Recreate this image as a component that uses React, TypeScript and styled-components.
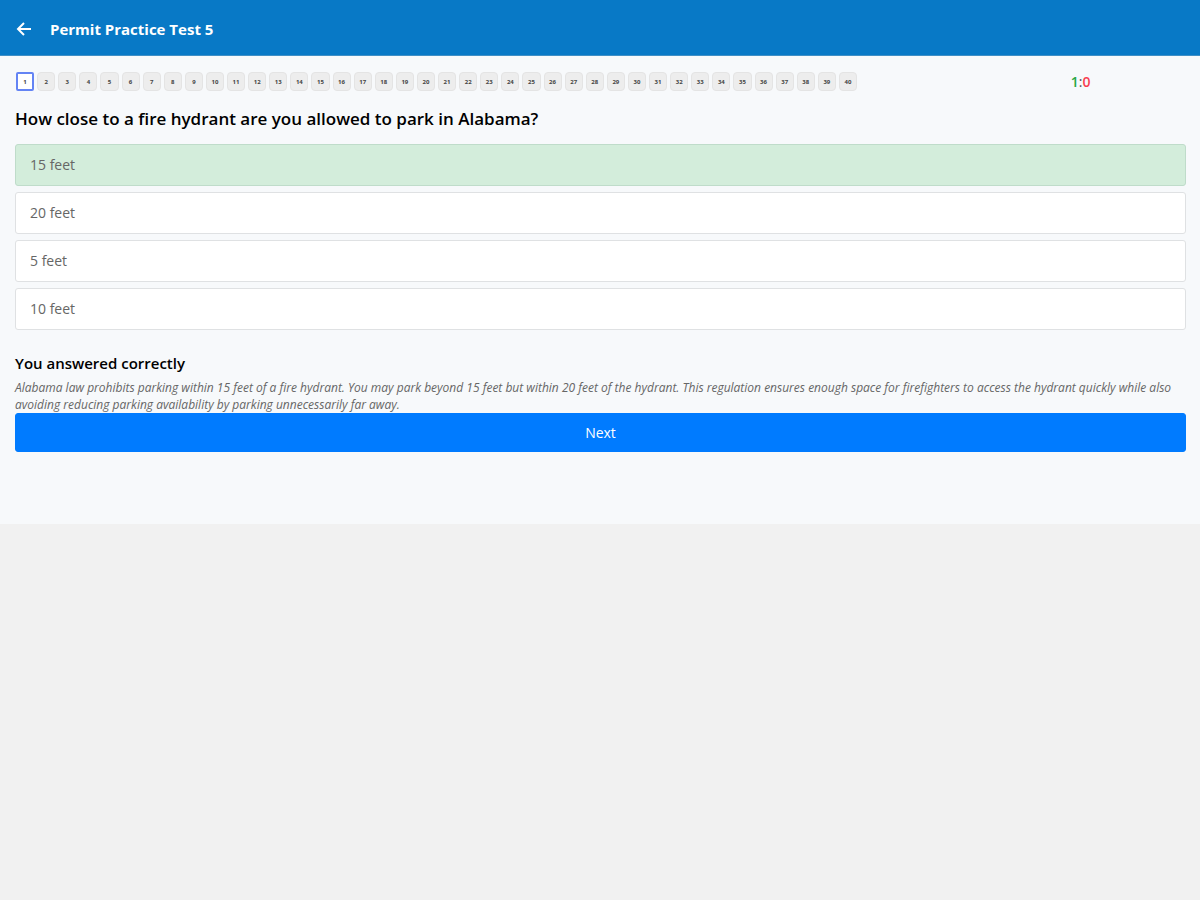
import React, { useState } from "react";
import styled, { createGlobalStyle } from "styled-components";

const GlobalStyle = createGlobalStyle`
  *, *::before, *::after { box-sizing: border-box; }
  body {
    margin: 0;
    background: #f1f1f1;
    color: #000;
    font-family: "Open Sans", "Noto Sans", sans-serif;
    font-size: 14px;
  }
  button { font-family: inherit; cursor: pointer; }
`;

const TopBar = styled.header`
  display: flex;
  align-items: center;
  gap: 16px;
  height: 56px;
  padding: 2px 14px 0;
  background: #0879c6;
  border-bottom: 1px solid #3f8fc6;
  color: #fff;
`;

const BackButton = styled.button`
  display: flex;
  padding: 0;
  border: 0;
  background: none;
  color: inherit;
`;

const Title = styled.h1`
  margin: 0;
  font-size: 15px;
  line-height: 24px;
  font-weight: 700;
`;

const Panel = styled.main`
  padding: 16px 14px 72px 15px;
  background: #f7f9fb;
`;

const ProgressRow = styled.div`
  display: flex;
  justify-content: space-between;
  align-items: center;
`;

const Pager = styled.nav`
  display: grid;
  grid-template-columns: repeat(40, minmax(0, 1fr));
  gap: 3px;
  flex: 0 1 842px;
  padding-left: 1px;
`;

const PageChip = styled.button<{ $current: boolean }>`
  height: 19px;
  padding: 0;
  border: ${(p) => (p.$current ? "2px solid #6484f4" : "1px solid #e4e4e4")};
  border-radius: ${(p) => (p.$current ? "2px" : "4px")};
  background: ${(p) => (p.$current ? "#fff" : "#ededed")};
  color: #444;
  font-size: 6px;
  line-height: 12px;
  font-weight: 700;
  text-align: center;
`;

const Score = styled.div`
  flex: 0 0 18%;
  text-align: center;
  color: #555;
  font-size: 14px;
  line-height: 18px;
`;

const ScoreValue = styled.span<{ $tone: string }>`
  color: ${(p) => p.$tone};
  font-weight: 600;
`;

const Question = styled.h2`
  margin: 16px 0 13px;
  font-size: 17px;
  line-height: 24px;
  font-weight: 600;
`;

const Answers = styled.div`
  display: grid;
  gap: 6px;
`;

const Answer = styled.button<{ $correct: boolean }>`
  height: 42px;
  padding: 0 14px;
  border: 1px solid ${(p) => (p.$correct ? "#bfdcca" : "#dfe1e3")};
  border-radius: 3px;
  background: ${(p) => (p.$correct ? "#d3eddb" : "#fff")};
  color: #666;
  font-size: 14px;
  line-height: 20px;
  text-align: left;
`;

const Result = styled.h3`
  margin: 23px 0 6px;
  font-size: 15px;
  line-height: 20px;
  font-weight: 600;
`;

const Explanation = styled.p`
  margin: 0;
  color: #666;
  font-size: 12px;
  line-height: 17px;
  font-style: italic;
`;

const NextButton = styled.button`
  display: block;
  width: 100%;
  height: 39px;
  border: 1px solid #007bff;
  border-radius: 3px;
  background: #007bff;
  color: #fff;
  font-size: 14px;
  line-height: 20px;
`;

const pages = Array.from({ length: 40 }, (_, i) => i + 1);
const answers = ["15 feet", "20 feet", "5 feet", "10 feet"];

export default function App() {
  const [page, setPage] = useState(1);

  return (
    <>
      <GlobalStyle />
      <TopBar>
        <BackButton type="button" aria-label="Back">
          <svg width="20" height="20" viewBox="0 0 20 20" fill="none" stroke="currentColor" strokeWidth="2">
            <path d="M17 10H4M10 4L4 10L10 16" />
          </svg>
        </BackButton>
        <Title>Permit Practice Test 5</Title>
      </TopBar>
      <Panel>
        <ProgressRow>
          <Pager aria-label="Questions">
            {pages.map((n) => (
              <PageChip key={n} type="button" $current={n === page} onClick={() => setPage(n)}>
                {n}
              </PageChip>
            ))}
          </Pager>
          <Score>
            <ScoreValue $tone="#28a745">1</ScoreValue>:<ScoreValue $tone="#f8404f">0</ScoreValue>
          </Score>
        </ProgressRow>
        <Question>How close to a fire hydrant are you allowed to park in Alabama?</Question>
        <Answers>
          {answers.map((text, i) => (
            <Answer key={text} type="button" $correct={i === 0}>
              {text}
            </Answer>
          ))}
        </Answers>
        <Result>You answered correctly</Result>
        <Explanation>
          Alabama law prohibits parking within 15 feet of a fire hydrant. You may park beyond 15 feet but within 20 feet
          of the hydrant. This regulation ensures enough space for firefighters to access the hydrant quickly while also
          avoiding reducing parking availability by parking unnecessarily far away.
        </Explanation>
        <NextButton type="button" onClick={() => setPage((p) => Math.min(p + 1, pages.length))}>
          Next
        </NextButton>
      </Panel>
    </>
  );
}
